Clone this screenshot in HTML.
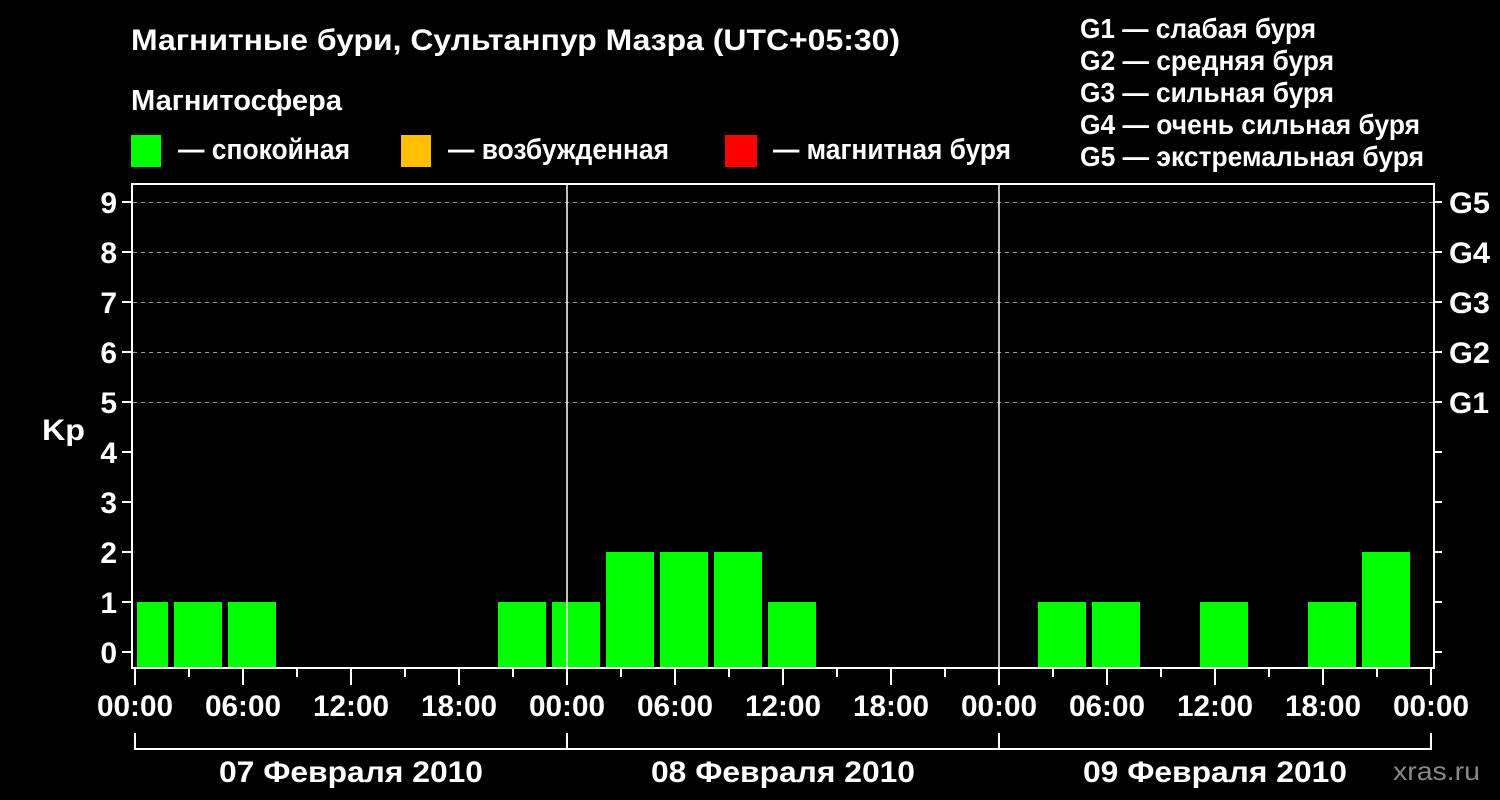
<!DOCTYPE html>
<html><head><meta charset="utf-8"><style>
html,body{margin:0;padding:0;background:#000;width:1500px;height:800px;overflow:hidden}
svg text{font-family:"Liberation Sans",sans-serif;font-weight:bold;fill:#fff}
</style></head><body>
<svg width="1500" height="800" xmlns="http://www.w3.org/2000/svg">
<rect width="1500" height="800" fill="#000"/>
<text x="131" y="50" font-size="30" textLength="769" lengthAdjust="spacingAndGlyphs">Магнитные бури, Сультанпур Мазра (UTC+05:30)</text>
<text x="131" y="110" font-size="29" textLength="211" lengthAdjust="spacingAndGlyphs">Магнитосфера</text>
<rect x="131" y="135" width="30" height="32" fill="#00ff00"/>
<text x="178" y="159" font-size="29" textLength="172" lengthAdjust="spacingAndGlyphs">— спокойная</text>
<rect x="401" y="135" width="30" height="32" fill="#ffc000"/>
<text x="448" y="159" font-size="29" textLength="221" lengthAdjust="spacingAndGlyphs">— возбужденная</text>
<rect x="725" y="135" width="32" height="32" fill="#ff0000"/>
<text x="773" y="159" font-size="29" textLength="238" lengthAdjust="spacingAndGlyphs">— магнитная буря</text>
<g font-size="28">
<text x="1080" y="38" textLength="236" lengthAdjust="spacingAndGlyphs">G1 — слабая буря</text>
<text x="1080" y="70" textLength="254" lengthAdjust="spacingAndGlyphs">G2 — средняя буря</text>
<text x="1080" y="102" textLength="254" lengthAdjust="spacingAndGlyphs">G3 — сильная буря</text>
<text x="1080" y="134" textLength="340" lengthAdjust="spacingAndGlyphs">G4 — очень сильная буря</text>
<text x="1080" y="166" textLength="344" lengthAdjust="spacingAndGlyphs">G5 — экстремальная буря</text>
</g>
<g stroke="#999" stroke-width="1" stroke-dasharray="4,4">
<line x1="133" y1="202.5" x2="1433" y2="202.5"/>
<line x1="133" y1="252.5" x2="1433" y2="252.5"/>
<line x1="133" y1="302.5" x2="1433" y2="302.5"/>
<line x1="133" y1="352.5" x2="1433" y2="352.5"/>
<line x1="133" y1="402.5" x2="1433" y2="402.5"/>
</g>
<g fill="#00ff00">
<rect x="137" y="602" width="31" height="66"/>
<rect x="174" y="602" width="48" height="66"/>
<rect x="228" y="602" width="48" height="66"/>
<rect x="498" y="602" width="48" height="66"/>
<rect x="552" y="602" width="48" height="66"/>
<rect x="606" y="552" width="48" height="116"/>
<rect x="660" y="552" width="48" height="116"/>
<rect x="714" y="552" width="48" height="116"/>
<rect x="768" y="602" width="48" height="66"/>
<rect x="1038" y="602" width="48" height="66"/>
<rect x="1092" y="602" width="48" height="66"/>
<rect x="1200" y="602" width="48" height="66"/>
<rect x="1308" y="602" width="48" height="66"/>
<rect x="1362" y="552" width="48" height="116"/>
</g>
<g stroke="#fff" stroke-width="2" fill="none">
<rect x="132" y="184" width="1302" height="484"/>
<line x1="567" y1="184" x2="567" y2="668" stroke-width="1.5"/>
<line x1="999" y1="184" x2="999" y2="668" stroke-width="1.5"/>
<path d="M122 652H132M122 602H132M122 552H132M122 502H132M122 452H132M122 402H132M122 352H132M122 302H132M122 252H132M122 202H132"/>
<path d="M1434 652H1442M1434 602H1442M1434 552H1442M1434 502H1442M1434 452H1442M1434 402H1442M1434 352H1442M1434 302H1442M1434 252H1442M1434 202H1442"/>
<path d="M135 669V685M189 669V677M243 669V685M297 669V677M351 669V685M405 669V677M459 669V685M513 669V677M567 669V685M621 669V677M675 669V685M729 669V677M783 669V685M837 669V677M891 669V685M945 669V677M999 669V685M1053 669V677M1107 669V685M1161 669V677M1215 669V685M1269 669V677M1323 669V685M1377 669V677M1431 669V685"/>
<path d="M135 733V749H1431V733M567 733V749M999 733V749"/>
</g>
<g font-size="30" text-anchor="end">
<text x="117" y="663">0</text><text x="117" y="613">1</text><text x="117" y="563">2</text><text x="117" y="513">3</text><text x="117" y="463">4</text><text x="117" y="413">5</text><text x="117" y="363">6</text><text x="117" y="313">7</text><text x="117" y="263">8</text><text x="117" y="213">9</text>
</g>
<text x="42" y="440" font-size="30" textLength="43" lengthAdjust="spacingAndGlyphs">Kp</text>
<g font-size="30">
<text x="1449" y="213" textLength="41" lengthAdjust="spacingAndGlyphs">G5</text><text x="1449" y="263" textLength="41" lengthAdjust="spacingAndGlyphs">G4</text><text x="1449" y="313" textLength="41" lengthAdjust="spacingAndGlyphs">G3</text><text x="1449" y="363" textLength="41" lengthAdjust="spacingAndGlyphs">G2</text><text x="1449" y="413" textLength="40" lengthAdjust="spacingAndGlyphs">G1</text>
</g>
<g font-size="30" text-anchor="middle">
<text x="135" y="716" textLength="76" lengthAdjust="spacingAndGlyphs">00:00</text><text x="243" y="716" textLength="76" lengthAdjust="spacingAndGlyphs">06:00</text><text x="351" y="716" textLength="76" lengthAdjust="spacingAndGlyphs">12:00</text><text x="459" y="716" textLength="76" lengthAdjust="spacingAndGlyphs">18:00</text>
<text x="567" y="716" textLength="76" lengthAdjust="spacingAndGlyphs">00:00</text><text x="675" y="716" textLength="76" lengthAdjust="spacingAndGlyphs">06:00</text><text x="783" y="716" textLength="76" lengthAdjust="spacingAndGlyphs">12:00</text><text x="891" y="716" textLength="76" lengthAdjust="spacingAndGlyphs">18:00</text>
<text x="999" y="716" textLength="76" lengthAdjust="spacingAndGlyphs">00:00</text><text x="1107" y="716" textLength="76" lengthAdjust="spacingAndGlyphs">06:00</text><text x="1215" y="716" textLength="76" lengthAdjust="spacingAndGlyphs">12:00</text><text x="1323" y="716" textLength="76" lengthAdjust="spacingAndGlyphs">18:00</text>
<text x="1431" y="716" textLength="76" lengthAdjust="spacingAndGlyphs">00:00</text>
<text x="351" y="782" textLength="264" lengthAdjust="spacingAndGlyphs">07 Февраля 2010</text>
<text x="783" y="782" textLength="264" lengthAdjust="spacingAndGlyphs">08 Февраля 2010</text>
<text x="1215" y="782" textLength="264" lengthAdjust="spacingAndGlyphs">09 Февраля 2010</text>
</g>
<text x="1393" y="780" font-size="26" textLength="87" lengthAdjust="spacingAndGlyphs" style="font-weight:normal;fill:#888">xras.ru</text>
</svg>
</body></html>
